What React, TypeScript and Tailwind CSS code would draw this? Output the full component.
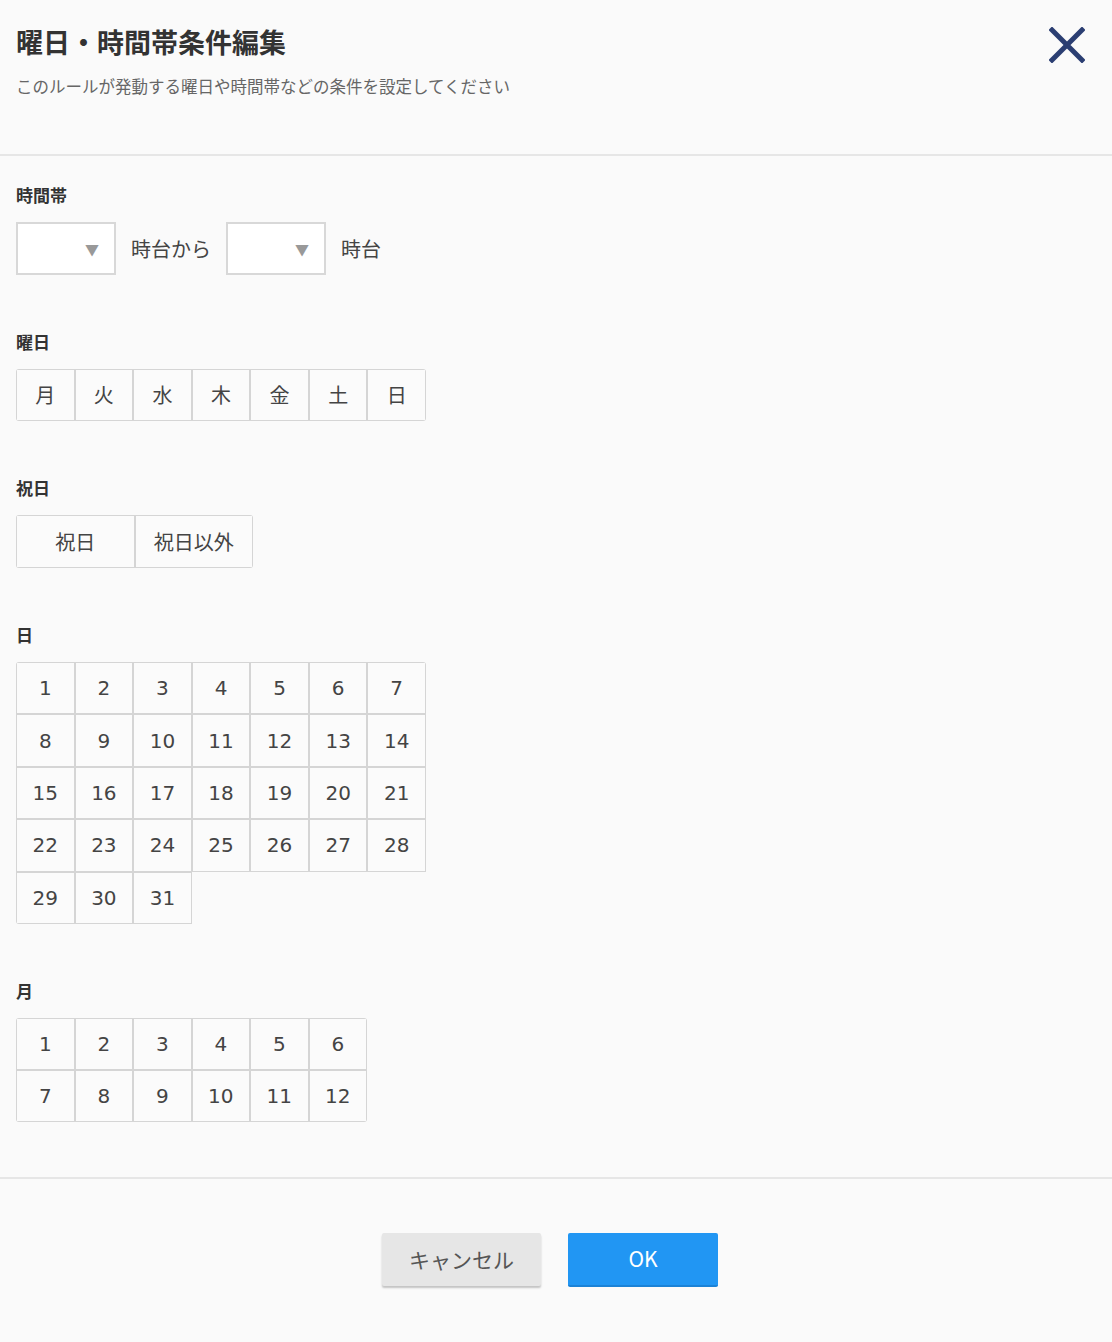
import React from "react";

const weekdays = ["月", "火", "水", "木", "金", "土", "日"];
const days = Array.from({ length: 31 }, (_, i) => String(i + 1));
const months = Array.from({ length: 12 }, (_, i) => String(i + 1));

function Label({ children }: { children: React.ReactNode }) {
  return <div className="mb-[15px] h-6 text-[17px] font-bold leading-6 text-[#333]">{children}</div>;
}

function Cell({ children, className = "" }: { children: React.ReactNode; className?: string }) {
  return (
    <div
      className={`flex items-center justify-center border border-[#d5d5d5] bg-[#fbfbfb] text-[20px] text-[#444] ${className}`}
    >
      {children}
    </div>
  );
}

function Select() {
  return (
    <div className="flex h-[53px] w-[100px] items-center justify-end border-2 border-[#d8d8d8] bg-white pr-[15px]">
      <span className="text-[14px] leading-none text-[#999]">▼</span>
    </div>
  );
}

export default function App() {
  return (
    <div className="min-h-[1342px] w-full bg-[#fafafa] font-['Noto_Sans_CJK_JP','Noto_Sans',sans-serif]">
      {/* header */}
      <div className="flex h-[154px] justify-between">
        <div className="pl-4 pt-[22px]">
          <h1 className="text-[27px] font-bold leading-[39px] text-[#333]">曜日・時間帯条件編集</h1>
          <p className="mt-[13px] text-[16.5px] leading-6 text-[#666]">
            このルールが発動する曜日や時間帯などの条件を設定してください
          </p>
        </div>
        <div className="pr-[27px] pt-[27px]">
          <svg width="36" height="36" viewBox="0 0 36 36">
            <path d="M3 3 L33 33 M33 3 L3 33" stroke="#2b3e72" strokeWidth="5" strokeLinecap="square" />
          </svg>
        </div>
      </div>
      <div className="h-[2px] bg-[#e6e6e6]" />

      {/* body */}
      <div className="px-4 pt-[27px]">
        <section className="mb-[55px]">
          <Label>時間帯</Label>
          <div className="flex items-center gap-[15px] text-[20px] text-[#444]">
            <Select />
            <span>時台から</span>
            <Select />
            <span>時台</span>
          </div>
        </section>

        <section className="mb-[55px]">
          <Label>曜日</Label>
          <div className="grid w-[410px] grid-cols-7 overflow-hidden rounded-[3px]">
            {weekdays.map((d) => (
              <Cell key={d} className="h-[52px]">
                {d}
              </Cell>
            ))}
          </div>
        </section>

        <section className="mb-[55px]">
          <Label>祝日</Label>
          <div className="grid w-[237px] grid-cols-2 overflow-hidden rounded-[3px]">
            <Cell className="h-[53px]">祝日</Cell>
            <Cell className="h-[53px]">祝日以外</Cell>
          </div>
        </section>

        <section className="mb-[55px]">
          <Label>日</Label>
          <div className="grid w-[410px] grid-cols-7 overflow-hidden rounded-[3px] font-['DejaVu_Sans',sans-serif]">
            {days.map((d) => (
              <Cell key={d} className="h-[52.4px]">
                {d}
              </Cell>
            ))}
          </div>
        </section>

        <section className="pb-[55px]">
          <Label>月</Label>
          <div className="grid w-[351px] grid-cols-6 overflow-hidden rounded-[3px] font-['DejaVu_Sans',sans-serif]">
            {months.map((m) => (
              <Cell key={m} className="h-[52px]">
                {m}
              </Cell>
            ))}
          </div>
        </section>
      </div>

      <div className="h-[2px] bg-[#e6e6e6]" />

      {/* footer */}
      <div className="flex justify-center gap-[27px] pb-[54px] pr-[12px] pt-[54px]">
        <button className="h-[53px] w-[159px] rounded-[2px] bg-[#e6e6e6] text-[21px] text-[#555] shadow-[0_2px_2px_rgba(0,0,0,0.22)]">
          キャンセル
        </button>
        <button className="h-[54px] w-[150px] rounded-[2px] border-b-2 border-[#1b82d6] bg-[#2196f3] text-[21px] text-white">
          OK
        </button>
      </div>
    </div>
  );
}
